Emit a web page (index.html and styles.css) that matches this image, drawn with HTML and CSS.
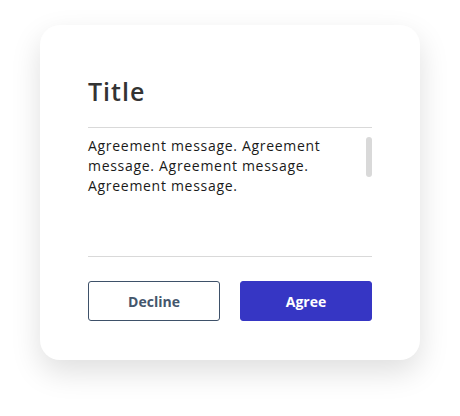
FILE: index.html
```html
<!DOCTYPE html>
<html lang="en">
<head>
<meta charset="utf-8">
<title>Agreement</title>
<link rel="stylesheet" href="styles.css">
</head>
<body>
<div class="stage">
  <div class="card">
    <h1 class="title">Title</h1>
    <div class="message">
      <p class="message-text">Agreement message. Agreement message. Agreement message. Agreement message.</p>
      <div class="scroll-thumb"></div>
    </div>
    <div class="actions">
      <button class="btn btn-decline">Decline</button>
      <button class="btn btn-agree">Agree</button>
    </div>
  </div>
</div>
</body>
</html>
```
FILE: styles.css
```css
html, body {
  margin: 0;
  padding: 0;
  background: #ffffff;
}
body {
  width: 460px;
  height: 416px;
  overflow: hidden;
}
.stage {
  padding: 25px 40px 0 40px;
}
.card {
  width: 380px;
  height: 335px;
  box-sizing: border-box;
  background: #ffffff;
  border-radius: 20px;
  box-shadow: 0 12px 30px rgba(0, 0, 0, 0.13);
  padding: 51px 48px 0 48px;
  display: flex;
  flex-direction: column;
}
.title {
  margin: 0;
  font-family: "Open Sans", Roboto, sans-serif;
  font-weight: 600;
  font-size: 25px;
  line-height: 31px;
  letter-spacing: 1px;
  color: #333333;
  padding-bottom: 20px;
  border-bottom: 1px solid #d9d9d9;
}
.message {
  position: relative;
  height: 129px;
  box-sizing: border-box;
  padding: 8px 20px 0 0;
  border-bottom: 1px solid #d9d9d9;
}
.message-text {
  margin: 0;
  font-family: "Open Sans", "Liberation Sans", sans-serif;
  font-size: 14px;
  line-height: 20px;
  letter-spacing: 0.7px;
  color: #1a1a1a;
}
.scroll-thumb {
  position: absolute;
  right: 0;
  top: 9px;
  width: 6px;
  height: 40px;
  border-radius: 3px;
  background: #d9d9d9;
}
.actions {
  display: flex;
  gap: 20px;
  margin-top: 24px;
}
.btn {
  flex: 1;
  height: 40px;
  border-radius: 3px;
  font-family: "Open Sans", "Liberation Sans", sans-serif;
  font-weight: 700;
  font-size: 14px;
  cursor: pointer;
}
.btn-decline {
  background: #ffffff;
  border: 1px solid #3e5169;
  color: #44566c;
}
.btn-agree {
  background: #3636c4;
  border: 1px solid #3636c4;
  color: #ffffff;
}
```
